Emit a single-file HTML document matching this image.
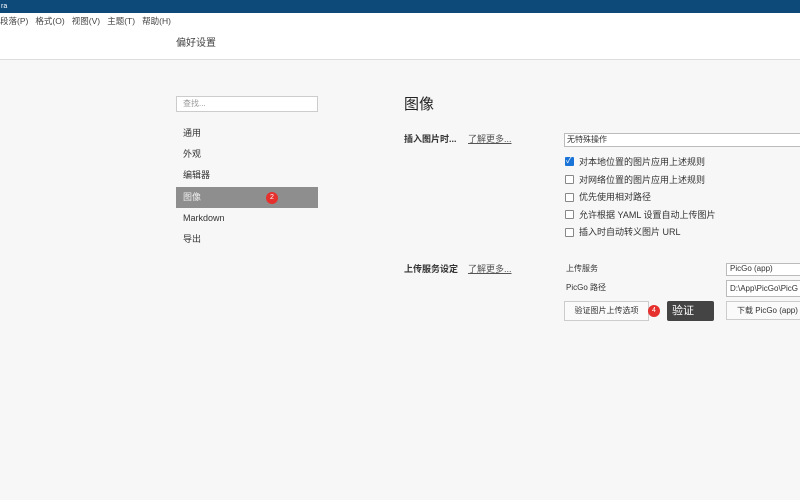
<!DOCTYPE html>
<html><head><meta charset="utf-8"><style>
*{margin:0;padding:0;box-sizing:border-box}
body{width:800px;height:500px;overflow:hidden;background:#f7f7f7;font-family:"Liberation Sans","Noto Sans CJK SC",sans-serif;font-size:9px;color:#333;position:relative}
.a{position:absolute;white-space:nowrap;line-height:12px}
.cb{position:absolute;width:9px;height:9px;border:1px solid #888;background:#fff;border-radius:1px}
.inp{position:absolute;background:#fff;border:1px solid #bbb}
.btn{position:absolute;background:#fafafa;border:1px solid #ccc;text-align:center}
</style></head><body>
<div class="a" style="left:0;top:0;width:800px;height:13px;background:#0d4a7a;color:#fff;font-size:7px;line-height:13px;padding-left:1px">ra</div>
<div class="a" style="left:0;top:13px;width:800px;height:17px;background:#fff;line-height:16px;font-size:8.5px;color:#444">段落(P)&nbsp;&nbsp;&nbsp;格式(O)&nbsp;&nbsp;&nbsp;视图(V)&nbsp;&nbsp;&nbsp;主题(T)&nbsp;&nbsp;&nbsp;帮助(H)</div>
<div class="a" style="left:0;top:30px;width:800px;height:30px;background:#fff;border-bottom:1px solid #ddd"></div>
<div class="a" style="left:176px;top:37px;font-size:10px;line-height:13px;color:#444">偏好设置</div>
<div class="inp" style="left:176px;top:96px;width:142px;height:16px;border-color:#ccc"></div>
<div class="a" style="left:183px;top:98px;font-size:8px;color:#999">查找...</div>
<div class="a" style="left:183px;top:127px">通用</div>
<div class="a" style="left:183px;top:148px">外观</div>
<div class="a" style="left:183px;top:169px">编辑器</div>
<div class="a" style="left:176px;top:187px;width:142px;height:21px;background:#8e8e8e"></div>
<div class="a" style="left:183px;top:191px;color:#eee">图像</div>
<div class="a" style="left:266px;top:192px;width:12px;height:12px;border-radius:6px;background:#e5302d;color:#fff;font-size:7px;text-align:center;line-height:12px">2</div>
<div class="a" style="left:183px;top:212px">Markdown</div>
<div class="a" style="left:183px;top:233px">导出</div>
<div class="a" style="left:404px;top:96px;font-size:15px;line-height:18px;color:#222">图像</div>
<div class="a" style="left:404px;top:133px;font-weight:bold">插入图片时...</div>
<div class="a" style="left:468px;top:133px;text-decoration:underline;color:#555">了解更多...</div>
<div class="inp" style="left:564px;top:133px;width:240px;height:14px"></div>
<div class="a" style="left:567px;top:134px;font-size:8px">无特殊操作</div>
<div class="cb" style="left:565px;top:157px;background:#1a73d6;border-color:#1a73d6"></div>
<div class="a" style="left:566px;top:155px;color:#fff;font-size:8px">✓</div>
<div class="a" style="left:579px;top:156px">对本地位置的图片应用上述规则</div>
<div class="cb" style="left:565px;top:175px"></div><div class="a" style="left:579px;top:174px">对网络位置的图片应用上述规则</div>
<div class="cb" style="left:565px;top:193px"></div><div class="a" style="left:579px;top:191px">优先使用相对路径</div>
<div class="cb" style="left:565px;top:210px"></div><div class="a" style="left:579px;top:209px">允许根据 YAML 设置自动上传图片</div>
<div class="cb" style="left:565px;top:228px"></div><div class="a" style="left:579px;top:226px">插入时自动转义图片 URL</div>
<div class="a" style="left:404px;top:263px;font-weight:bold">上传服务设定</div>
<div class="a" style="left:468px;top:263px;text-decoration:underline;color:#555">了解更多...</div>
<div class="a" style="left:566px;top:263px;font-size:8px">上传服务</div>
<div class="a" style="left:566px;top:282px;font-size:8px">PicGo 路径</div>
<div class="inp" style="left:726px;top:263px;width:80px;height:13px"></div>
<div class="a" style="left:730px;top:263px;font-size:8px">PicGo (app)</div>
<div class="inp" style="left:726px;top:280px;width:80px;height:17px"></div>
<div class="a" style="left:730px;top:283px;font-size:8px">D:\App\PicGo\PicG</div>
<div class="btn" style="left:564px;top:301px;width:85px;height:20px;line-height:18px;font-size:8px">验证图片上传选项</div>
<div class="a" style="left:648px;top:305px;width:12px;height:12px;border-radius:6px;background:#e5302d;color:#fff;font-size:7px;text-align:center;line-height:12px">4</div>
<div class="a" style="left:663px;top:307px;width:0;height:0;border:4px solid transparent;border-right-color:#444"></div>
<div class="a" style="left:667px;top:301px;width:47px;height:20px;background:#444;color:#fff;font-size:11px;line-height:20px;padding-left:5px;border-radius:2px">验证</div>
<div class="btn" style="left:726px;top:301px;width:80px;height:19px;line-height:17px;font-size:8px;text-align:left;padding-left:10px">下载 PicGo (app)</div>
</body></html>
